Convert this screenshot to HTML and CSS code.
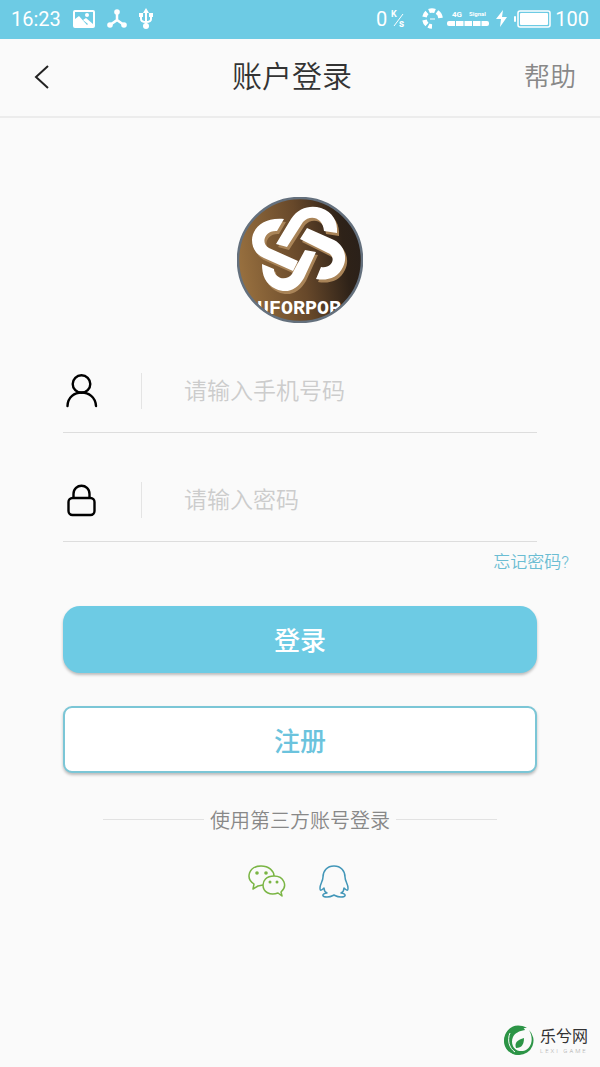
FILE: index.html
```html
<!DOCTYPE html>
<html lang="zh-CN">
<head>
    <meta charset="UTF-8">
    <meta name="viewport" content="width=device-width, initial-scale=1.0">
    <title>账户登录</title>
    <link rel="stylesheet" href="styles.css">
</head>
<body>
    <div class="status-bar">
        <div class="status-left">
            <span>16:23</span>
            <svg width="22" height="18" viewBox="0 0 22 18">
                <path d="M2 0 H20 Q22 0 22 2 V16 Q22 18 20 18 H2 Q0 18 0 16 V2 Q0 0 2 0 Z M2 2 V9 L6 6 L14 15 L15 14 L10 10 L13 8 L20 14 V2 Z" fill="#fff" fill-rule="evenodd"/>
                <circle cx="14" cy="5" r="2" fill="#fff"/>
            </svg>
            <svg width="20" height="19" viewBox="0 0 20 19">
                <path d="M10 3 V11 L3 16 M10 11 L17 16" fill="none" stroke="#fff" stroke-width="2.500"/>
                <circle cx="10" cy="3" r="2.800" fill="#fff"/>
                <circle cx="3" cy="16" r="2.800" fill="#fff"/>
                <circle cx="17" cy="16" r="2.800" fill="#fff"/>
            </svg>
            <svg width="14" height="21" viewBox="0 0 14 21">
                <path d="M7 3 V18 M2 7 V11 Q2 14 7 14 Q12 14 12 11 V7" fill="none" stroke="#fff" stroke-width="2"/>
                <path d="M7 0 L10 5 H4 Z M0 5 H4 V9 H0 Z M10 5 H14 V9 H10 Z" fill="#fff"/>
                <circle cx="7" cy="18" r="3" fill="#fff"/>
            </svg>
        </div>
        <div class="status-right">
            <span>0</span>
            <svg class="speed" width="15" height="22" viewBox="0 0 15 22">
                <text x="0" y="9" font-size="9" font-weight="700" fill="#fff">K</text>
                <path d="M3 18 L12 6" stroke="#fff" stroke-width="1"/>
                <text x="8" y="19" font-size="10" font-weight="700" fill="#fff">s</text>
            </svg>
            <svg class="ring" width="21" height="21" viewBox="0 0 21 21">
                <g fill="none" stroke="#fff" stroke-width="4.500">
                    <path d="M7 3 A8 8 0 0 1 13 3"/>
                    <path d="M15 4 A8 8 0 0 1 18.500 10"/>
                    <path d="M5 4.500 A8 8 0 0 0 2.500 9"/>
                    <path d="M2.500 12 A8 8 0 0 0 5 16.500"/>
                    <path d="M6.500 17.500 A8 8 0 0 0 10 18.500"/>
                </g>
                <path d="M8 11 H13" stroke="#b5e5f1" stroke-width="2"/>
            </svg>
            <svg class="signal" width="42" height="18" viewBox="0 0 42 18">
                <text x="5" y="7" font-size="8" font-weight="700" fill="#fff">4G</text>
                <text x="22" y="6" font-size="6" font-weight="700" fill="#fff">Signal</text>
                <rect x="0" y="11" width="42" height="5" rx="2" fill="#fff"/>
                <path d="M8.500 11 V16 M17 11 V16 M25.500 11 V16 M34 11 V16" stroke="#6dcbe4"/>
            </svg>
            <svg class="bolt" width="11" height="17" viewBox="0 0 11 17">
                <path d="M7 0 L0 9 H5 L4 17 L11 7 H6 Z" fill="#fff"/>
            </svg>
            <svg class="battery" width="37" height="18" viewBox="0 0 37 18">
                <rect x="4" y="1" width="32" height="16" rx="2" fill="none" stroke="#fff" stroke-width="1.500"/>
                <rect x="6" y="3" width="28" height="12" rx="1" fill="#fff"/>
                <rect x="0" y="6" width="2" height="6" rx="1" fill="#fff"/>
            </svg>
            <span>100</span>
        </div>
    </div>

    <header class="header">
        <button type="button" class="back" aria-label="返回">
            <svg width="16" height="26" viewBox="0 0 16 26">
                <path d="M14 2 L2 13 L14 24" fill="none" stroke="#222" stroke-width="2"/>
            </svg>
        </button>
        <h1>账户登录</h1>
        <a href="#" class="help">帮助</a>
    </header>

    <main class="content">
        <svg class="avatar" width="126" height="126" viewBox="0 0 126 126">
            <defs>
                <linearGradient id="bronze" x1="0" y1="0.500" x2="1" y2="0.350">
                    <stop offset="0" stop-color="#98703f"/>
                    <stop offset="0.500" stop-color="#67482a"/>
                    <stop offset="0.850" stop-color="#2e2218"/>
                    <stop offset="1" stop-color="#2a2019"/>
                </linearGradient>
                <clipPath id="round"><circle cx="63" cy="63" r="61"/></clipPath>
                <g id="knot">
                    <path d="M47 22 C26 20 15 32 15 43 C15 52 20 58 27 61 L56 74 L61 64 L32 51 C23 46 28 33 40 34 Z"/>
                    <path d="M39 47 L54 22 C62 10 74 8 84 11 C96 15 101 25 100 36 L87 34 C86 20 73 17 66 25 L50 50 Z"/>
                    <path d="M70 31 L97 43 C107 48 111 60 106 70 C101 81 90 84 79 82 L84 70 C95 72 100 60 91 56 L63 42 Z"/>
                    <path d="M25 67 L37 72 C37 81 49 85 55 77 L68 53 L79 55 L67 81 C60 93 50 97 39 92 C28 87 25 78 25 67 Z"/>
                </g>
            </defs>
            <circle cx="63" cy="63" r="62" fill="url(#bronze)"/>
            <g clip-path="url(#round)">
                <use href="#knot" fill="#a98458" transform="translate(2 3)"/>
                <use href="#knot" fill="#fff"/>
                <text class="avatar-text" x="20" y="117">UFORPOR</text>
            </g>
            <circle cx="63" cy="63" r="62" fill="none" stroke="#64707d" stroke-width="2.500"/>
        </svg>

        <form class="login-form">
            <div class="field">
                <label for="phone" aria-label="手机号码">
                    <svg width="36" height="36" viewBox="0 0 36 36">
                        <g fill="none" stroke="#000" stroke-width="2.400" stroke-linecap="round">
                            <circle cx="18.500" cy="11" r="8.800"/>
                            <path d="M4.500 33 C5 15 32 15 33 33"/>
                        </g>
                    </svg>
                </label>
                <input type="tel" id="phone" name="phone" placeholder="请输入手机号码">
            </div>
            <div class="field">
                <label for="password" aria-label="密码">
                    <svg width="36" height="36" viewBox="0 0 36 36">
                        <g fill="none" stroke="#000" stroke-width="2.400">
                            <rect x="5.500" y="16" width="26" height="17" rx="4"/>
                            <path d="M10.500 16 V12 C10.500 1 26.500 1 26.500 12 V16"/>
                        </g>
                    </svg>
                </label>
                <input type="password" id="password" name="password" placeholder="请输入密码">
            </div>
            <a href="#" class="forgot">忘记密码?</a>
            <button type="submit" class="btn btn-login">登录</button>
            <button type="button" class="btn btn-register">注册</button>
        </form>

        <div class="divider"><span>使用第三方账号登录</span></div>

        <div class="third-party">
            <a href="#" aria-label="微信登录">
                <svg width="38" height="32" viewBox="0 0 38 32">
                    <g fill="none" stroke="#7ab544" stroke-width="1.500" stroke-linejoin="round">
                        <path d="M15 20 L10 21 L5 24 L6 19 C-3 13 1 1 13 1 C21 1 26 6 26 11"/>
                        <path d="M26 11 C18 11 15 16 15 20 C15 27 22 31 30 28 L34 31 L33 27 C40 21 36 11 26 11 Z"/>
                    </g>
                    <g fill="#7ab544">
                        <circle cx="9" cy="8" r="1.800"/>
                        <circle cx="18" cy="8" r="1.800"/>
                        <circle cx="22" cy="17" r="1.500"/>
                        <circle cx="29" cy="17" r="1.500"/>
                    </g>
                </svg>
            </a>
            <a href="#" aria-label="QQ登录">
                <svg width="30" height="33" viewBox="0 0 30 33">
                    <path d="M15 1 C8 1 4 6 4 12 C4 16 1 19 1 23 C1 26 2 26 5 23 C5 25 6 27 8 28 C2 29 3 32 8 32 C12 32 13 31 15 30 C17 31 18 32 22 32 C27 32 28 29 22 28 C24 27 25 25 25 23 C28 26 29 26 29 23 C29 19 26 16 26 12 C26 6 22 1 15 1 Z" fill="none" stroke="#4296b8" stroke-width="1.500" stroke-linejoin="round"/>
                </svg>
            </a>
        </div>
    </main>

    <div class="watermark">
        <svg width="30" height="31" viewBox="0 0 30 31">
            <path d="M23 3 C10 -4 0 5 0 16 C0 25 8 31 17 30 C8 28 4 23 4 16 C4 8 12 2 23 3 Z" fill="#2c9446"/>
            <path d="M15 1 A14.500 14.500 0 1 0 15 30 A14.500 14.500 0 0 0 25 5 C30 13 28 24 19 26 C10 27 6 19 9 12 C11 8 15 6 21 5 C20 3 18 1 15 1 Z" fill="#2c9446"/>
            <path d="M12 23 C10 17 14 15 20 13 C20 19 18 23 12 23 Z" fill="#2c9446"/>
            <path d="M6 8 C3 15 5 23 11 27" fill="none" stroke="#fafafa"/>
        </svg>
        <div class="watermark-text">
            <strong>乐兮网</strong>
            <small>LEXI GAME</small>
        </div>
    </div>
</body>
</html>
```
FILE: styles.css
```css
* {
    box-sizing: border-box;
}
body {
    margin: 0;
    min-height: 100vh;
    position: relative;
    background-color: #fafafa;
    font-family: Roboto, "Noto Sans CJK SC", sans-serif;
    font-weight: 350;
}
a {
    text-decoration: none;
}
svg {
    display: block;
}
button {
    font-family: inherit;
    cursor: pointer;
}

/* status bar */
.status-bar {
    display: flex;
    justify-content: space-between;
    align-items: center;
    height: 39px;
    padding: 0 11px 2px;
    background-color: #6dcbe4;
    color: #fff;
    font-size: 20px;
    font-weight: 400;
}
.status-left,
.status-right {
    display: flex;
    align-items: center;
}
.status-left {
    gap: 12px;
}
.status-right {
    gap: 4px;
}
.ring {
    margin-left: 12px;
}
.bolt {
    margin: 0 3px;
}

/* title bar */
.header {
    display: grid;
    grid-template-columns: 1fr auto 1fr;
    align-items: center;
    height: 79px;
    padding: 0 24px 2px 8px;
    border-bottom: 2px solid #ececec;
}
.header h1 {
    margin: 0;
    color: #333;
    font-size: 30px;
    font-weight: 350;
    line-height: 40px;
}
.back {
    justify-self: start;
    padding: 0 0 0 26px;
    border: none;
    background: none;
}
.help {
    justify-self: end;
    color: #888;
    font-size: 26px;
    line-height: 36px;
}

.content {
    padding: 79px 63px 0;
}
.avatar {
    margin: 0 auto;
}
.avatar-text {
    fill: #fff;
    font-family: "Liberation Mono", monospace;
    font-size: 20px;
    font-weight: 700;
}

/* form */
.login-form {
    display: flex;
    flex-direction: column;
    padding-top: 1px;
}
.field {
    display: flex;
    align-items: center;
    height: 109px;
    padding-top: 26px;
    border-bottom: 1px solid #ddd;
}
.field label {
    width: 79px;
    border-right: 1px solid #e4e4e4;
}
.field input {
    flex: 1;
    min-width: 0;
    padding: 0 0 0 42px;
    border: none;
    outline: none;
    background: none;
    color: #333;
    font-family: inherit;
    font-size: 23px;
    font-weight: 350;
}
.field input::placeholder {
    color: #ccc;
}
.forgot {
    align-self: flex-end;
    margin: 8px -32px 32px 0;
    color: #6bbdd3;
    font-size: 17px;
    line-height: 24px;
}
.btn {
    height: 67px;
    padding: 0 0 2px;
    font-size: 26px;
    font-weight: 500;
    box-shadow: 0 2px 3px rgba(0, 0, 0, 0.25);
}
.btn-login {
    border: none;
    border-radius: 17px;
    background-color: #6dcbe4;
    color: #fff;
}
.btn-register {
    margin-top: 33px;
    padding: 0;
    border: 2px solid #7bc6d6;
    border-radius: 9px;
    background-color: #fff;
    color: #6bc3dd;
}

/* third party login */
.divider {
    display: flex;
    align-items: center;
    gap: 6px;
    margin: 33px 40px 0;
    color: #888;
    font-size: 20px;
    line-height: 30px;
}
.divider::before,
.divider::after {
    content: "";
    flex: 1;
    height: 1px;
    margin-bottom: 4px;
    background-color: #e2e2e2;
}
.third-party {
    display: flex;
    justify-content: center;
    gap: 33px;
    margin-top: 29px;
    padding-right: 4px;
}

.watermark {
    position: absolute;
    right: 12px;
    bottom: 11px;
    display: flex;
    align-items: center;
    gap: 6px;
}
.watermark-text {
    display: flex;
    flex-direction: column;
    color: #333;
}
.watermark-text strong {
    font-size: 16px;
    font-weight: 400;
    line-height: 20px;
}
.watermark-text small {
    color: #aaa;
    font-size: 6px;
    letter-spacing: 2px;
    line-height: 8px;
}
```
